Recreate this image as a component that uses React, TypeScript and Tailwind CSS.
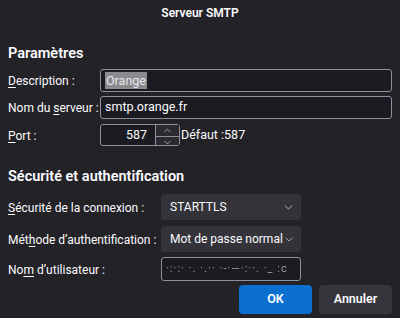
import { ChevronDown, ChevronUp } from "lucide-react";

function Label({ pre, key1, post }: { pre: string; key1: string; post: string }) {
  return (
    <span className="whitespace-nowrap text-[12px] text-[#fbfbfe]">
      {pre}
      <span className="underline underline-offset-2">{key1}</span>
      {post}
    </span>
  );
}

function Select({ value }: { value: string }) {
  return (
    <div className="flex h-[26px] w-[140px] items-center justify-between whitespace-nowrap rounded-[4px] bg-[#34333a] pl-[9px] pr-[6px] text-[12px] text-[#fbfbfe]">
      <span>{value}</span>
      <ChevronDown size={13} strokeWidth={1.5} className="text-[#d0d0d6]" />
    </div>
  );
}

export default function App() {
  return (
    <div
      className="h-[318px] w-[400px] overflow-hidden bg-[#232227] text-[#fbfbfe]"
      style={{ fontFamily: 'Roboto, "Noto Sans", sans-serif' }}
    >
      <div className="flex h-[24px] items-center justify-center pt-[1px] text-[12px] font-semibold">
        Serveur SMTP
      </div>

      <div className="px-[8px]">
        <h2 className="mt-[20px] text-[14.5px] font-semibold leading-[20px]">Paramètres</h2>

        <div className="mt-[4px] flex items-center">
          <div className="w-[92px]">
            <Label pre="" key1="D" post="escription :" />
          </div>
          <div className="flex h-[23px] flex-1 items-center rounded-[3px] border border-[#8f8f9d] bg-[#1c1b21] px-[4px] text-[12.5px]">
            <span className="bg-[#8a8a8f] px-[1px] leading-[17px] text-[#e8e8ee]">Orange</span>
          </div>
        </div>

        <div className="mt-[3px] flex items-center">
          <div className="w-[92px]">
            <Label pre="Nom du " key1="s" post="erveur :" />
          </div>
          <div className="flex h-[23px] flex-1 items-center rounded-[3px] border border-[#8f8f9d] bg-[#1c1b21] px-[4px] text-[12.5px]">
            smtp.orange.fr
          </div>
        </div>

        <div className="mt-[4px] flex items-center">
          <div className="w-[92px]">
            <Label pre="" key1="P" post="ort :" />
          </div>
          <div className="flex h-[22px] items-stretch rounded-[3px] border border-[#8f8f9d] bg-[#1c1b21]">
            <div className="flex w-[54px] items-center justify-end pr-[8px] text-[12.5px]">587</div>
            <div className="flex w-[24px] flex-col border-l border-[#8f8f9d] bg-[#2b2a31]">
              <div className="flex flex-1 items-center justify-center border-b border-[#8f8f9d]">
                <ChevronUp size={11} strokeWidth={1.5} className="text-[#d0d0d6]" />
              </div>
              <div className="flex flex-1 items-center justify-center">
                <ChevronDown size={11} strokeWidth={1.5} className="text-[#d0d0d6]" />
              </div>
            </div>
          </div>
          <span className="ml-[1px] text-[12.5px]">Défaut :587</span>
        </div>

        <h2 className="mt-[20px] text-[14.5px] font-semibold leading-[20px]">Sécurité et authentification</h2>

        <div className="mt-[7px] flex items-center">
          <div className="w-[153px]">
            <Label pre="" key1="S" post="écurité de la connexion :" />
          </div>
          <Select value="STARTTLS" />
        </div>

        <div className="mt-[6px] flex items-center">
          <div className="w-[153px]">
            <Label pre="Mét" key1="h" post="ode d’authentification :" />
          </div>
          <Select value="Mot de passe normal" />
        </div>

        <div className="mt-[5px] flex items-center">
          <div className="w-[153px]">
            <Label pre="No" key1="m" post=" d’utilisateur :" />
          </div>
          <div className="flex h-[24px] w-[140px] items-center overflow-hidden rounded-[3px] border border-[#8f8f9d] bg-[#1c1b21] px-[4px] text-[11px] text-[#9a9aa2]">
            <span className="whitespace-nowrap blur-[0.6px] tracking-[1px]">·:·:· ·. ·.·· ·-·—·:··. ·_ :c</span>
          </div>
        </div>

        <div className="mt-[4px] flex justify-end gap-[7px]">
          <button className="h-[29px] w-[73px] rounded-[4px] bg-[#0b6fd0] text-[12.5px] font-semibold text-white">
            OK
          </button>
          <button className="h-[29px] w-[73px] rounded-[4px] bg-[#36353c] text-[12.5px] font-semibold text-[#fbfbfe]">
            Annuler
          </button>
        </div>
      </div>
    </div>
  );
}
